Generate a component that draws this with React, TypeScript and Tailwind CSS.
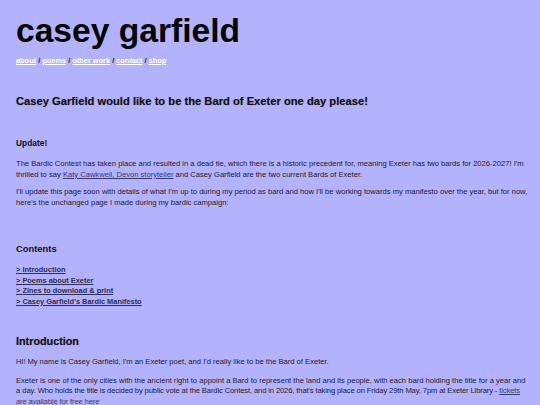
import React from "react";

const NAV = ["about", "poems", "other work", "contact", "shop"];

const CONTENTS = [
    "Introduction",
    "Poems about Exeter",
    "Zines to download & print",
    "Casey Garfield's Bardic Manifesto",
];

export default function App() {
    return (
        <div
            className="min-h-[405px] bg-[#b3b3fd] pl-4 pr-3 pt-[11px] text-[#1a1a2e] overflow-hidden"
            style={{ fontFamily: '"Liberation Sans", Arial, sans-serif' }}
        >
            {/* Header */}
            <header>
                <h1 className="text-[33.6px] font-bold leading-[40px] text-black">casey garfield</h1>
                <nav className="mt-[5px] text-[7.4px] font-bold leading-[10px] text-[#1a1a2e]">
                    {NAV.map((item, i) => (
                        <span key={item}>
                            <a className="text-white underline">{item}</a>
                            {i < NAV.length - 1 && " / "}
                        </span>
                    ))}
                </nav>
            </header>

            <h2 className="mt-[27px] text-[11.2px] font-bold leading-[16px] text-[#111] [text-shadow:0_0_1px_rgba(0,0,0,0.35)]">
                Casey Garfield would like to be the Bard of Exeter one day please!
            </h2>

            {/* Update */}
            <h3 className="mt-[28px] text-[8.4px] font-bold leading-[12px] text-[#111]">Update!</h3>
            <p className="mt-[10px] text-[7.6px] leading-[10.6px]">
                The Bardic Contest has taken place and resulted in a dead tie, which there is a historic precedent for, meaning Exeter has two bards for 2026-2027! I'm thrilled to say{" "}
                <a className="underline text-[#3a3a6a]">Katy Cawkwell, Devon storyteller</a> and Casey Garfield are the two current Bards of Exeter.
            </p>
            <p className="mt-[7px] text-[7.6px] leading-[10.6px]">
                I'll update this page soon with details of what I'm up to during my period as bard and how I'll be working towards my manifesto over the year, but for now, here's the unchanged page I made during my bardic campaign:
            </p>

            {/* Contents */}
            <h3 className="mt-[35px] text-[9.4px] font-bold leading-[12px] text-[#111]">Contents</h3>
            <ul className="mt-[10px] text-[7.4px] font-bold leading-[10.4px] text-[#2d2d55]">
                {CONTENTS.map((c) => (
                    <li key={c}>
                        <a className="underline">&gt; {c}</a>
                    </li>
                ))}
            </ul>

            {/* Introduction */}
            <h2 className="mt-[26px] text-[10.8px] font-bold leading-[16px] text-[#111] [text-shadow:0_0_1px_rgba(0,0,0,0.35)]">
                Introduction
            </h2>
            <p className="mt-[8px] text-[7.6px] leading-[10.6px]">
                Hi! My name is Casey Garfield, I'm an Exeter poet, and I'd really like to be the Bard of Exeter.
            </p>
            <p className="mt-[8px] text-[7.6px] leading-[10.6px]">
                Exeter is one of the only cities with the ancient right to appoint a Bard to represent the land and its people, with each bard holding the title for a year and a{" "}
                <span className="tracking-[-0.12px]">
                    day. Who holds the title is decided by public vote at the Bardic Contest, and in 2026, that's taking place on Friday 29th May, 7pm at Exeter Library -{" "}
                    <a className="underline text-[#3a3a6a]">tickets are available for free here</a>
                </span>
            </p>
        </div>
    );
}
